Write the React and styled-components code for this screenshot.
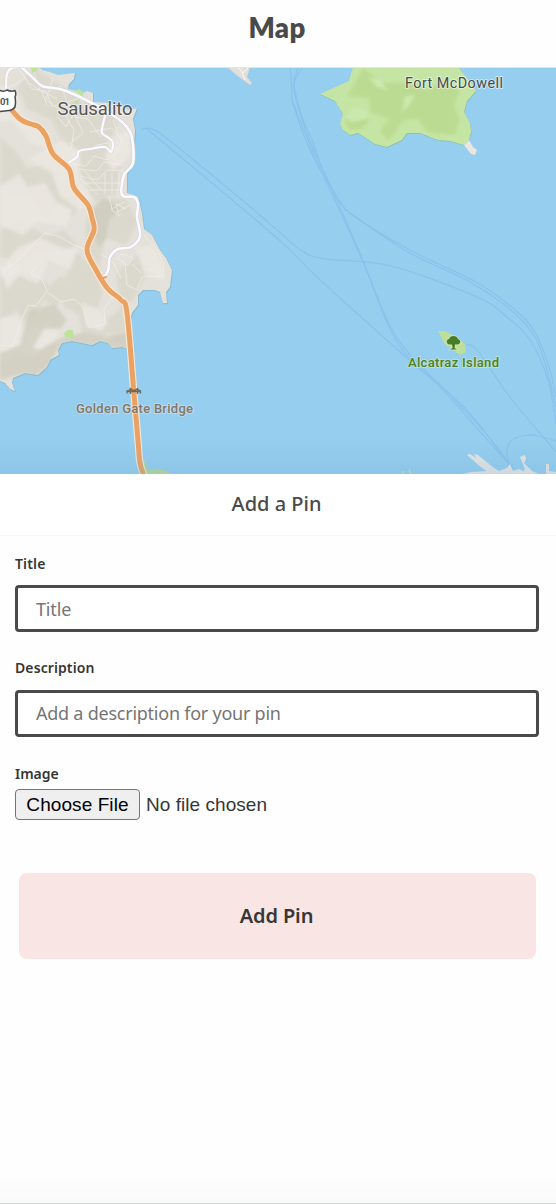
import React from "react";
import styled, { createGlobalStyle } from "styled-components";

const GlobalStyle = createGlobalStyle`
  *, *::before, *::after { box-sizing: border-box; }
  body {
    margin: 0;
    background: #fefefe;
    font-family: "Noto Sans", "Open Sans", sans-serif;
    color: #363636;
  }
`;

const Screen = styled.main`
  display: flex;
  flex-direction: column;
  width: 100%;
  height: 1204px;
  overflow: hidden;
`;

const Header = styled.header`
  display: flex;
  justify-content: center;
  height: 67px;
  padding: 9px 2px 0 0;
  flex: none;
`;

const PageTitle = styled.h1`
  margin: 0;
  font: 800 27.5px/38px Lato, sans-serif;
  letter-spacing: 0.3px;
  color: #4a4a4a;
`;

const MapView = styled.svg`
  display: block;
  flex: none;
  width: 556px;
  height: 407px;
`;

const MapLabel = styled.text`
  font-family: Roboto, sans-serif;
  font-size: ${(p) => p.$size}px;
  font-weight: ${(p) => p.$weight || 500};
  fill: ${(p) => p.$color};
  stroke: ${(p) => p.$halo || "rgba(255,255,255,0.55)"};
  stroke-width: 2px;
  stroke-linejoin: round;
  paint-order: stroke;
`;

const Sheet = styled.section`
  display: flex;
  flex-direction: column;
  flex: 1;
  border-bottom: 1px solid #d2d4d3;
  background: linear-gradient(to top, #fafafa 0, #fefefe 30px);
`;

const SheetHeader = styled.div`
  display: flex;
  justify-content: center;
  height: 62px;
  padding: 15px 3px 0 0;
  background: #fff;
  border-bottom: 1px solid #f5f8f7;
`;

const SheetTitle = styled.h2`
  margin: 0;
  font: 500 20px/30px "Noto Sans", sans-serif;
  letter-spacing: ${(p) => p.$tracking}px;
  color: #4a4a4a;
`;

const Form = styled.form`
  display: flex;
  flex-direction: column;
  padding: 18px 17px 0 15px;
`;

const Field = styled.div`
  display: flex;
  flex-direction: column;
  height: ${(p) => p.$height}px;
`;

const Label = styled.label`
  font-size: 14px;
  line-height: 20px;
  font-weight: 600;
  letter-spacing: ${(p) => p.$tracking || 0}px;
  margin-bottom: ${(p) => p.$gap}px;
`;

const TextInput = styled.input`
  width: 100%;
  height: 47px;
  padding: 0 18px ${(p) => p.$lift || 0}px;
  border: 3px solid #4a4a4a;
  border-radius: 4px;
  background: #fff;
  outline: none;
  font: 400 18px "Noto Sans", sans-serif;
  letter-spacing: ${(p) => p.$tracking}px;
  &::placeholder { color: #757575; opacity: 1; }
`;

const FileRow = styled.div`
  display: flex;
  align-items: center;
  gap: 6px;
  font: 400 19px "Liberation Sans", Arial, sans-serif;
  letter-spacing: 0.05px;
`;

const FileButton = styled.button`
  width: 125px;
  height: 31px;
  padding: 0;
  border: 1px solid #757575;
  border-radius: 4px;
  background: #efefef;
  color: #000;
  font: inherit;
  letter-spacing: 0.08px;
  white-space: nowrap;
`;

const SubmitButton = styled.button`
  height: 86px;
  margin: 0 3.5px 0 3.5px;
  padding: 0 1px 2px 0;
  border: 0;
  border-radius: 8px;
  background: #f9e5e3;
  color: #363636;
  font: 600 20px "Noto Sans", sans-serif;
  letter-spacing: ${(p) => p.$tracking}px;
`;

const coast =
  "M0 67H39L42 70 50 72 58 75 75 73 74 79 69 84 68 89 83 93 87 91 93 93 93 102 110 103 130 110 137 108 133 119 135 130 133 163 127 174 127 193 138 197 142 213 144 229 152 235 160 250 166 258 172 270 170 287 166 292 167 303 163 303 160 292 155 290 143 290 138 295 138 305 132 313 129 325 131 350 122 347 112 348 108 343 100 341 92 345 72 341 62 343 58 350 59 355 50 360 47 367 38 375 25 373 13 378 12 383 15 391 10 389 5 383 0 381Z";
const angel =
  "M353 67 349 81 320 94 335 101 343 114 340 124 343 130 350 135 358 133 375 144 387 147 402 140 407 133 420 133 438 140 450 141 464 145 469 140 471 132 470 123 464 112 467 101 476 91 472 84 458 67Z";

const darkHills = [
  "M34 67 52 80 84 96 100 112 94 134 76 149 60 138 51 120 27 109 17 87Z",
  "M68 106 98 105 118 121 109 149 121 166 116 194 94 201 77 164Z",
  "M0 137 15 150 28 168 49 164 65 180 76 176 84 197 73 216 57 206 47 218 29 196 8 195 0 180Z",
  "M98 198 126 199 138 222 126 245 105 238 100 268 85 248 86 220Z",
  "M0 230 18 220 47 236 63 230 77 244 67 253 40 250 20 265 0 256Z",
  "M0 278 28 270 50 286 61 275 70 292 55 307 44 300 27 324 16 311 0 320Z",
  "M77 252 94 269 103 292 96 315 112 327 105 337 83 334 78 314 64 307 59 289Z",
  "M116 274 137 255 157 272 143 281 133 300 123 306 128 338 115 343 103 322 120 308Z",
];
const lightHills = [
  "M0 84 17 96 22 114 41 126 49 149 31 143 13 121 0 121Z",
  "M0 186 19 174 28 187 45 183 56 202 72 209 67 226 37 222 23 235 0 225Z",
  "M61 141 80 151 79 180 92 198 81 211 60 196 52 173 29 160 42 151Z",
  "M18 248 41 238 62 248 78 249 70 270 49 260 38 284 19 275 7 289 0 268Z",
  "M0 318 18 316 26 337 12 357 0 361Z",
  "M31 330 48 322 60 328 55 340 39 352 27 358 19 350Z",
  "M82 303 98 309 108 323 101 331 86 326Z",
  "M110 139 130 130 130 155 113 171 105 157Z",
  "M136 248 151 245 161 259 165 280 145 276Z",
];
const coastShades = [
  "M0 353 22 344 39 350 59 339 84 332 105 337 130 333 131 350 112 348 100 341 92 345 62 343 47 367 35 376 25 373 0 380Z",
  "M30 310 54 304 67 320 60 329 44 329 31 351 18 362 21 339Z",
  "M91 211 104 198 122 208 109 220 106 239 98 248 93 231Z",
];
const streets = [
  "M0 91 16 84 25 78 32 89 46 91 52 106 69 104 75 117 88 119 101 137",
  "M18 68 28 82 42 92 47 105 M33 70 40 90 57 99 M53 78 46 99 63 113 76 109 87 118",
  "M49 91 61 86 67 102 80 98 87 111 M58 117 66 127 74 113 83 133 69 144 M65 115 74 130 71 150",
  "M69 163 86 166 94 156 107 160 119 151 M79 169 97 171 104 162 122 165 M80 176 97 180 107 170 124 171",
  "M83 183 124 183 M87 190 124 190 M105 173V194 M112 173V194 M119 172V192 M80 178 98 195 M84 170 101 190",
  "M90 132 112 128 122 141 113 157 120 166 M94 146 107 143 120 150 M113 120 118 134 125 145",
  "M109 196 112 209 124 202 M111 209 119 216 116 204 126 209 M117 212 130 205",
  "M0 345 13 346 22 319 28 305 36 306 47 291 42 279 31 274 36 266 M47 292 61 302 74 299 83 307 89 328 105 324 104 309 113 296",
  "M3 273 24 254 45 233 58 236 72 244 84 249 M2 271 21 258 M6 277 18 266",
  "M101 254 113 262 121 278 M116 259 122 254 133 258 128 265 118 259 M125 264 127 285 137 290 142 277 163 276 M132 264 141 273 M144 235 157 250 164 263 163 276 149 269",
];
const angelShades = [
  "M363 68 384 83 407 82 427 89 445 80 460 91 454 105 460 119 455 135 427 132 418 119 403 120 396 132 388 141 380 131 389 119 370 112 369 98 347 96 355 83Z",
  "M343 116 352 122 370 119 362 129 349 130Z",
  "M420 105 430 100 438 108 425 116Z",
];

// Catmull-Rom curve through the points, given as one "x y x y ..." string.
function curve(text) {
  const n = text.split(" ").map(Number);
  const pts = [];
  for (let i = 0; i < n.length; i += 2) pts.push([n[i], n[i + 1]]);
  let d = `M${pts[0]}`;
  for (let i = 0; i < pts.length - 1; i++) {
    const a = pts[i - 1] || pts[i];
    const b = pts[i];
    const c = pts[i + 1];
    const e = pts[i + 2] || c;
    d += `C${b[0] + (c[0] - a[0]) / 6} ${b[1] + (c[1] - a[1]) / 6} ${c[0] - (e[0] - b[0]) / 6} ${c[1] - (e[1] - b[1]) / 6} ${c}`;
  }
  return d;
}

const ferries = [
  "142 129 158 132 207 171 248 205 284 236 302 251 325 259 391 266 477 297 508 318 530 340 548 380 556 424",
  "147 129 188 163 278 239 318 278 407 358 466 409 512 469",
  "298 67 294 83 296 99 307 134 321 165 334 194 362 258 386 320 405 353 443 390 482 434 514 469",
  "290 67 292 89 293 103 307 143 321 171 344 207 350 213 408 252 470 282 512 311 535 337 547 370 556 407",
  "303 67 295 80 295 91 302 117 313 142 321 166 333 190 350 213 410 250 476 282 514 309 535 332 549 367 556 397",
  "292 100 315 157 333 196 363 262 390 326 414 359 451 396 488 436 510 465",
  "466 344 473 346 478 351 489 367 513 401 556 452",
  "509 465 507 449 514 439 530 435 542 437 556 441",
].map(curve);

const highway = curve(
  "5 102 20 119 31 124 39 127 46 136 53 154 69 169 74 188 88 205 92 218 94 230 87 250 96 270 108 289 121 300 127 313 134 394 138 441 140 463 144 476"
);
const mainStreet = curve(
  "19 65 31 76 42 86 54 88 66 91 88 101 114 116 126 126 132 138 133 163 124 175 122 195 134 197 138 204 137 217 140 236 131 247 118 249 110 257 108 271 102 279"
);
const sideStreets =
  curve("20 67 12 68 7 74 6 88") +
  curve("68 163 77 157 79 151 90 149 105 147 111 152 113 143 109 138 102 133 103 124 105 116");

function Paths({ items, ...attrs }) {
  return (
    <g {...attrs}>
      {items.map((d) => <path d={d} key={d} />)}
    </g>
  );
}

function BayMap() {
  return (
    <MapView viewBox="0 67 556 407" role="img" aria-label="Map of San Francisco Bay">
      <defs>
        <clipPath id="marin"><path d={coast} /></clipPath>
        <clipPath id="angel"><path d={angel} /></clipPath>
        <filter id="relief"><feGaussianBlur stdDeviation="1.8" /></filter>
        <linearGradient id="edge" x1="0" y1="0" x2="0" y2="1">
          <stop offset="0" stopColor="#6da5cc" stopOpacity="0" />
          <stop offset="1" stopColor="#6da5cc" stopOpacity="0.22" />
        </linearGradient>
      </defs>
      <rect y="67" width="556" height="407" fill="#96ceef" />
      <path d={coast} transform="translate(.5 .8)" fill="#88bad2" stroke="#88bad2" strokeLinejoin="round" strokeWidth=".6" />
      <path d={coast} fill="#e4e1da" />
      <g clipPath="url(#marin)">
        <g filter="url(#relief)">
          <Paths items={darkHills} fill="#dad8cb" opacity=".8" />
          <Paths items={lightHills} fill="#ebe7e1" opacity=".9" />
          <Paths items={coastShades} fill="#cbc9b9" opacity=".65" />
        </g>
        <Paths items={streets} fill="none" stroke="#f3f0ea" strokeWidth="1" strokeLinejoin="round" opacity=".65" />
      </g>
      <path d="M30 67H39L37 70 33 73Z M75 91 79 89 83 92 83 96Z M74 102 78 100 79 102 77 104Z" fill="#bce398" />
      <path d="M64 333 68 330 73 330 74 337H65Z" fill="#bce398" />
      <path d="M227 67 239 77 250 85 252 83 247 77 250 67Z" fill="#e2dfd9" stroke="#c6d0cf" strokeWidth=".5" />
      <path d="M238 67 243 73 248 68M242 73 245 80" fill="none" stroke="#faf9f6" strokeWidth="1" />
      <path d={angel} transform="translate(.4 .8)" fill="#86bdb0" />
      <path d={angel} fill="#c5e5a4" />
      <g clipPath="url(#angel)">
        <g filter="url(#relief)">
          <Paths items={angelShades} fill="#bcdb92" />
          <path d="M344 118 355 107 368 111 367 118 353 122Z M369 78 377 87 387 90 380 79Z M405 97 414 95 410 105 402 112Z" fill="#cae9ad" />
        </g>
      </g>
      <path d="M464 145 469 140 473 147 477 150 475 155 471 154Z" fill="#eae6df" />
      <Paths items={ferries} fill="none" stroke="#7fb8e8" strokeWidth="1.2" opacity=".55" />
      <path d="M142 474 143 458 148 469 163 470 174 474Z" fill="#b7d994" />

      <g fill="none" strokeLinecap="round" strokeLinejoin="round">
        <path d={mainStreet} stroke="#d2d3da" strokeWidth="3.6" />
        <path d={sideStreets} stroke="#d6d6dc" strokeWidth="3" />
        <path d={mainStreet} stroke="#fafaff" strokeWidth="2.6" />
        <path d={sideStreets} stroke="#fafaff" strokeWidth="2.2" />
        <path d={highway} stroke="#fae8d6" strokeWidth="7.2" />
        <path d={highway} stroke="#eaa263" strokeWidth="5" />
        <path d="M53 154 50 151M103 278 106 277M113 294 119 297" stroke="#eaa263" strokeWidth="2" />
      </g>

      <path d="M-8 90 0 90.5Q4 92 7 90Q11 92 15 90.5Q16.5 94 15 97Q16 102 15 107Q13 110 9 110.5L0 111.5L-8 111Z" fill="#fff" stroke="#4a4b4a" strokeWidth="1.5" strokeLinejoin="round" />
      <text x="0" y="104.5" fontFamily="Roboto, sans-serif" fontWeight="700" fontSize="9.5" textLength="10" fill="#555">01</text>
      <path d="M438 331 445 331 456 337 465 344 466 352 460 355 453 350 444 343Z" fill="#bedf98" />
      <path d="M447 343Q446 339.5 449 339Q450 336 453.5 336Q457 336 458 339Q461 340 460 343Q459 345 455 344.5L454.6 348 457 349.5H450L452.6 348 452 344.5Q448 345 447 343Z" fill="#487d27" stroke="#cfe8b8" strokeWidth="1.4" paintOrder="stroke" />
      <path d="M127 393.500V391Q129 391 130.500 388.500Q134 392.500 137.500 388.500Q139 391 140.500 391V393.500M127 391.500H140.500M130.500 388.500V394M137.500 388.500V394" fill="none" stroke="#72685c" strokeWidth="1.3" />
      <path d="M403 471V474M409 470 411 474" stroke="#cce1ad" strokeWidth="1.5" />
      <g fill="#e9e6e1">
        <path d="M467 455 470 454 476 458 474 454 478 455 494 468 499 471 507 468 510 464 513 471 519 469 530 474H462L471 472 487 471 482 468Z" />
        <path d="M520 457 525 455 526 459 524 463 532 471 539 474H521L525 469Z" />
        <path d="M546 464H549V471L556 472V474H546Z" />
      </g>
      <rect y="440" width="556" height="34" fill="url(#edge)" />
      <path d="M0 67.5H556" stroke="#dce8ed" />

      <MapLabel x="57.5" y="115" $size="18.5" $color="#565654" $weight={400} textLength="75" lengthAdjust="spacing">Sausalito</MapLabel>
      <MapLabel x="405" y="87.5" $size="14.4" $color="#464c49" $weight={400} textLength="98" lengthAdjust="spacing">Fort McDowell</MapLabel>
      <MapLabel x="408" y="367" $size="13" $color="#4d802f" $halo="rgba(205,232,190,.7)" textLength="91" lengthAdjust="spacing">Alcatraz Island</MapLabel>
      <MapLabel x="76" y="413" $size="13" $color="#80776e" $halo="rgba(230,230,220,.5)" textLength="117" lengthAdjust="spacing">Golden Gate Bridge</MapLabel>
    </MapView>
  );
}

export default function App() {
  return (
    <>
      <GlobalStyle />
      <Screen>
        <Header><PageTitle>Map</PageTitle></Header>
        <BayMap />
        <Sheet>
          <SheetHeader><SheetTitle $tracking={0}>Add a Pin</SheetTitle></SheetHeader>
          <Form onSubmit={(e) => e.preventDefault()}>
            <Field $height={104}>
              <Label htmlFor="title" $gap={11} $tracking={0.15}>Title</Label>
              <TextInput id="title" placeholder="Title" $tracking={-0.15} />
            </Field>
            <Field $height={106}>
              <Label htmlFor="description" $gap={12} $tracking={0.1}>Description</Label>
              <TextInput id="description" placeholder="Add a description for your pin" $tracking={-0.24} $lift={2} />
            </Field>
            <Field $height={109}>
              <Label $gap={5}>Image</Label>
              <FileRow>
                <FileButton type="button">Choose File</FileButton>
                <span>No file chosen</span>
              </FileRow>
            </Field>
            <SubmitButton $tracking={-0.1}>Add Pin</SubmitButton>
          </Form>
        </Sheet>
      </Screen>
    </>
  );
}
